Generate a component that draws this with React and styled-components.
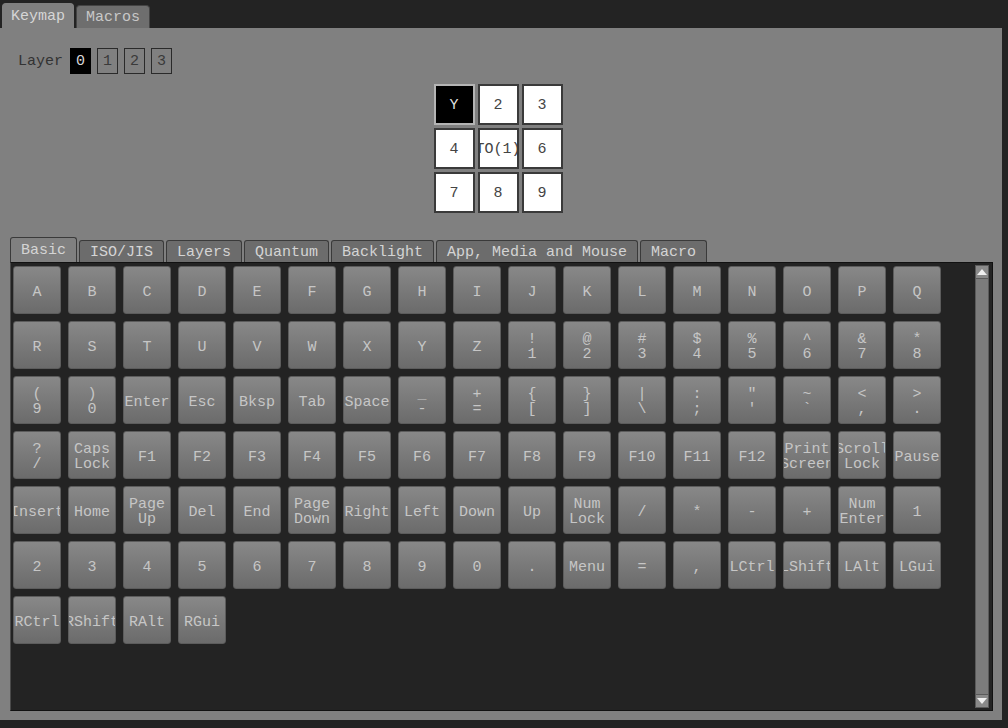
import React, { useState } from "react"
import styled, { createGlobalStyle } from "styled-components"

const GlobalStyle = createGlobalStyle`
  html, body {
    margin: 0;
    padding: 0;
    background: #232323;
  }
  body {
    font-family: "Liberation Mono", "Courier New", monospace;
  }
`

const Page = styled.div`
  width: 1008px;
  height: 728px;
  display: flex;
  flex-direction: column;
  background: #232323;
  overflow: hidden;
`

const TopTabs = styled.div`
  display: flex;
  align-items: flex-end;
  height: 28px;
  padding-left: 2px;
  gap: 2px;
`

const TopTab = styled.div`
  height: ${p => (p.active ? 25 : 23)}px;
  box-sizing: border-box;
  padding: 0 ${p => (p.active ? 8 : 9)}px;
  display: flex;
  align-items: center;
  font-size: 15px;
  color: ${p => (p.active ? "#d6d6d6" : "#c8c8c8")};
  background: ${p => (p.active ? "#808080" : "#6e6e6e")};
  border: 1px solid ${p => (p.active ? "#808080" : "#444")};
  border-bottom: none;
  border-radius: 4px 4px 0 0;
`

const Panel = styled.div`
  width: 1002px;
  height: 692px;
  box-sizing: border-box;
  background: #808080;
  padding: 20px 9px 9px 10px;
  display: flex;
  flex-direction: column;
`

const LayerRow = styled.div`
  display: flex;
  align-items: center;
  gap: 6px;
  padding-left: 8px;
  height: 26px;
`

const LayerLabel = styled.span`
  font-size: 15px;
  color: #333;
  margin-right: 1px;
`

const LayerBox = styled.div`
  width: 21px;
  height: 26px;
  box-sizing: border-box;
  display: flex;
  align-items: center;
  justify-content: center;
  font-size: 15px;
  border: 1px solid ${p => (p.active ? "#000" : "#2a2a2a")};
  background: ${p => (p.active ? "#000" : "transparent")};
  color: ${p => (p.active ? "#d8d8d8" : "#3a3a3a")};
`

const GridWrap = styled.div`
  display: flex;
  justify-content: center;
  margin-top: 10px;
  padding-right: 7px;
`

const Grid = styled.div`
  display: grid;
  grid-template-columns: repeat(3, 41px);
  grid-auto-rows: 41px;
  gap: 3px;
`

const Cell = styled.div`
  box-sizing: border-box;
  display: flex;
  align-items: center;
  justify-content: center;
  overflow: hidden;
  white-space: nowrap;
  font-size: 15px;
  padding-top: 2px;
  border: 2px solid ${p => (p.selected ? "#b4b4b4" : "#3a3a3a")};
  background: ${p => (p.selected ? "#000" : "#fff")};
  color: ${p => (p.selected ? "#dedede" : "#444")};
`

const SubTabs = styled.div`
  display: flex;
  align-items: flex-end;
  gap: 2px;
  margin-top: 24px;
  height: 25px;
`

const SubTab = styled.div`
  height: ${p => (p.active ? 25 : 22)}px;
  box-sizing: border-box;
  padding: 1px 10px 0;
  display: flex;
  align-items: center;
  font-size: 15px;
  color: #d4d4d4;
  background: ${p => (p.active ? "#808080" : "#6c6c6c")};
  border: 1px solid #3a3a3a;
  border-bottom: none;
  border-radius: 3px 3px 0 0;
`

const KeyArea = styled.div`
  flex: 1;
  display: flex;
  background: #232323;
  border: 1px solid #111;
  border-left-color: #4a4a4a;
  padding: 2px 1px 2px 0;
  min-height: 0;
`

const Keys = styled.div`
  flex: 1;
  display: flex;
  flex-wrap: wrap;
  align-content: flex-start;
  gap: 7px;
  padding: 1px 0 0 2px;
`

const Key = styled.div`
  width: 48px;
  height: 48px;
  box-sizing: border-box;
  display: flex;
  flex-direction: column;
  align-items: center;
  justify-content: center;
  overflow: hidden;
  white-space: nowrap;
  font-size: 15px;
  line-height: 15px;
  padding-top: 4px;
  color: #c6c6c6;
  background: linear-gradient(#888888, #6b6b6b);
  border: 1px solid #5c5c5c;
  border-radius: 3px;
`

const ScrollBar = styled.div`
  width: 14px;
  display: flex;
  flex-direction: column;
  margin-right: 2px;
`

const ScrollButton = styled.div`
  height: 14px;
  box-sizing: border-box;
  display: flex;
  align-items: center;
  justify-content: center;
  background: #8a8a8a;
  border: 1px solid #5a5a5a;
`

const ScrollThumb = styled.div`
  flex: 1;
  background: #7c7c7c;
  border: 1px solid #5a5a5a;
  border-top: none;
  border-bottom: none;
`

const Arrow = ({ down }) => (
  <svg width="10" height="6" viewBox="0 0 10 6">
    <polygon points={down ? "0,0 10,0 5,6" : "0,6 10,6 5,0"} fill="#f0f0f0" />
  </svg>
)

const keymap = [
  "A", "B", "C", "D", "E", "F", "G", "H", "I", "J", "K", "L", "M", "N", "O", "P", "Q",
  "R", "S", "T", "U", "V", "W", "X", "Y", "Z",
  "!|1", "@|2", "#|3", "$|4", "%|5", "^|6", "&|7", "*|8",
  "(|9", ")|0", "Enter", "Esc", "Bksp", "Tab", "Space", "_|-", "+|=", "{|[", "}|]",
  "¦|\\", ":|;", "\"|'", "~|`", "<|,", ">|.",
  "?|/", "Caps|Lock", "F1", "F2", "F3", "F4", "F5", "F6", "F7", "F8", "F9", "F10", "F11", "F12",
  "Print|Screen", "Scroll|Lock", "Pause",
  "Insert", "Home", "Page|Up", "Del", "End", "Page|Down", "Right", "Left", "Down", "Up",
  "Num|Lock", "/", "*", "-", "+", "Num|Enter", "1",
  "2", "3", "4", "5", "6", "7", "8", "9", "0", ".", "Menu", "=", ",",
  "LCtrl", "LShift", "LAlt", "LGui",
  "RCtrl", "RShift", "RAlt", "RGui",
]

const subTabs = ["Basic", "ISO/JIS", "Layers", "Quantum", "Backlight", "App, Media and Mouse", "Macro"]
const cells = ["Y", "2", "3", "4", "TO(1)", "6", "7", "8", "9"]

export default function App() {
  const [layer, setLayer] = useState(0)
  const [tab, setTab] = useState("Basic")

  return (
    <Page>
      <GlobalStyle />
      <TopTabs>
        <TopTab active>Keymap</TopTab>
        <TopTab>Macros</TopTab>
      </TopTabs>
      <Panel>
        <LayerRow>
          <LayerLabel>Layer</LayerLabel>
          {[0, 1, 2, 3].map(n => (
            <LayerBox key={n} active={n === layer} onClick={() => setLayer(n)}>
              {n}
            </LayerBox>
          ))}
        </LayerRow>
        <GridWrap>
          <Grid>
            {cells.map((c, i) => (
              <Cell key={i} selected={i === 0}>{c}</Cell>
            ))}
          </Grid>
        </GridWrap>
        <SubTabs>
          {subTabs.map(t => (
            <SubTab key={t} active={t === tab} onClick={() => setTab(t)}>
              {t}
            </SubTab>
          ))}
        </SubTabs>
        <KeyArea>
          <Keys>
            {keymap.map((k, i) => (
              <Key key={i}>
                {k.length > 1 && k.includes("|")
                  ? k.split("|").map((line, j) => <span key={j}>{line === "¦" ? "|" : line}</span>)
                  : k}
              </Key>
            ))}
          </Keys>
          <ScrollBar>
            <ScrollButton><Arrow /></ScrollButton>
            <ScrollThumb />
            <ScrollButton><Arrow down /></ScrollButton>
          </ScrollBar>
        </KeyArea>
      </Panel>
    </Page>
  )
}
